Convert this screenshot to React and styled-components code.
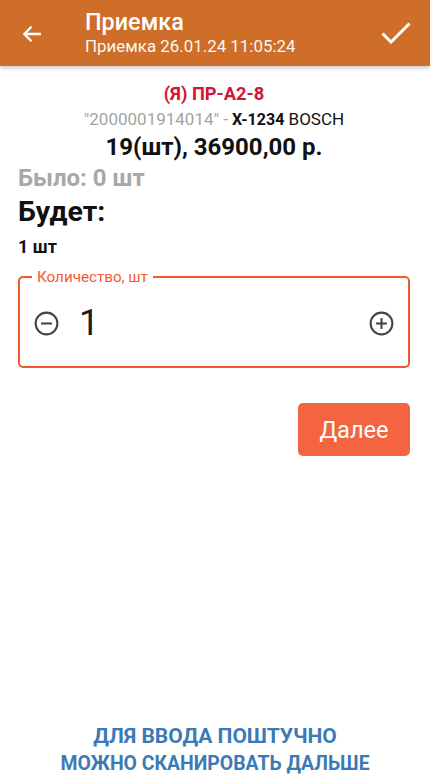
import React from "react"
import styled, { createGlobalStyle } from "styled-components"

const GlobalStyle = createGlobalStyle`
  html, body {
    margin: 0;
    padding: 0;
    background: #ffffff;
    font-family: Roboto, "Noto Sans", "Liberation Sans", sans-serif;
  }
`

const Page = styled.div`
  display: flex;
  flex-direction: column;
  height: 100vh;
  overflow: hidden;
  background: #ffffff;
`
const Header = styled.header`
  display: flex;
  align-items: center;
  height: 66px;
  flex-shrink: 0;
  background-color: #ce6e28;
  box-shadow: 0 2px 4px rgba(0, 0, 0, 0.22);
  color: #ffffff;
  position: relative;
  z-index: 1;
`
const IconButton = styled.button`
  display: flex;
  align-items: center;
  justify-content: center;
  border: 0;
  padding: 0;
  background: none;
  cursor: pointer;
  margin: ${props => props.margin || "0"};
`
const TitleBlock = styled.div`
  display: flex;
  flex-direction: column;
  flex: 1;
  margin-left: 43px;
`
const Title = styled.div`
  font-size: 23.4px;
  font-weight: 500;
  line-height: 26px;
`
const Subtitle = styled.div`
  font-size: 16.9px;
  line-height: 22px;
  opacity: 0.95;
`
const Content = styled.main`
  display: flex;
  flex-direction: column;
  padding: 16px 20px 0 18px;
`
const Line = styled.div`
  text-align: ${props => props.align || "left"};
  font-size: ${props => props.size}px;
  line-height: ${props => props.lh}px;
  font-weight: ${props => props.weight || 400};
  color: ${props => props.color || "#111111"};
  margin-top: ${props => props.mt || 0}px;
`
const Gray = styled.span`
  color: #a3a3a3;
`
const Strong = styled.span`
  font-weight: 700;
  font-size: 16px;
`
const Field = styled.fieldset`
  margin: 11px 0 0 0;
  padding: 0 12px 5px 12px;
  min-width: 0;
  border: 2px solid #f2592f;
  border-radius: 5px;
`
const Legend = styled.legend`
  padding: 0 5px;
  font-size: 15.2px;
  line-height: 16px;
  color: #f2592f;
`
const FieldRow = styled.div`
  display: flex;
  align-items: center;
  height: 76px;
`
const Value = styled.div`
  flex: 1;
  font-size: 36px;
  font-weight: 400;
  color: #1a1a1a;
  margin-left: 18px;
  line-height: 40px;
`
const Actions = styled.div`
  display: flex;
  justify-content: flex-end;
  margin-top: 35px;
`
const NextButton = styled.button`
  width: 112px;
  height: 53px;
  border: 0;
  border-radius: 5px;
  background-color: #f46440;
  color: #ffffff;
  font-family: inherit;
  font-size: 23.6px;
  cursor: pointer;
`
const Footer = styled.footer`
  margin-top: auto;
  margin-bottom: -3px;
  text-align: center;
  color: #3a7ab7;
  font-weight: 700;
  line-height: 28px;
`
const FooterLine = styled.div`
  font-size: ${props => props.size}px;
`

const CircleIcon = ({ plus }) => (
  <svg width="29" height="29" viewBox="0 0 24 24" fill="none">
    <circle cx="12" cy="12" r="9" stroke="#444444" strokeWidth="1.7" />
    <path d="M7.5 12h9" stroke="#444444" strokeWidth="1.7" />
    {plus && <path d="M12 7.5v9" stroke="#444444" strokeWidth="1.7" />}
  </svg>
)

const App = () => {
  return (
    <Page>
      <GlobalStyle />
      <Header>
        <IconButton margin="2px 0 0 22px" aria-label="Назад">
          <svg width="20" height="18" viewBox="0 0 20 18" fill="none">
            <path d="M19 9H2.5M9.5 1.8L2.3 9l7.2 7.2" stroke="#ffffff" strokeWidth="2.3" />
          </svg>
        </IconButton>
        <TitleBlock>
          <Title>Приемка</Title>
          <Subtitle>Приемка 26.01.24 11:05:24</Subtitle>
        </TitleBlock>
        <IconButton margin="0 19px 0 0" aria-label="Готово">
          <svg width="30" height="22" viewBox="0 0 30 22" fill="none">
            <path d="M1.5 11.5L10 20L28.5 1.5" stroke="#ffffff" strokeWidth="3" />
          </svg>
        </IconButton>
      </Header>
      <Content>
        <Line align="center" size={18.3} lh={24} weight={700} color="#d2143a">
          (Я) ПР-А2-8
        </Line>
        <Line align="center" size={17} lh={26}>
          <Gray>"2000001914014" - </Gray>
          <Strong>X-1234</Strong> BOSCH
        </Line>
        <Line align="center" size={24} lh={28} weight={700}>
          19(шт), 36900,00 р.
        </Line>
        <Line size={24} lh={28} weight={700} color="#a8a8a8" mt={3}>
          Было: 0 шт
        </Line>
        <Line size={28.5} lh={34} weight={700} mt={3}>
          Будет:
        </Line>
        <Line size={18} lh={22} weight={700} mt={7}>
          1 шт
        </Line>
        <Field>
          <Legend>Количество, шт</Legend>
          <FieldRow>
            <CircleIcon />
            <Value>1</Value>
            <CircleIcon plus />
          </FieldRow>
        </Field>
        <Actions>
          <NextButton>Далее</NextButton>
        </Actions>
      </Content>
      <Footer>
        <FooterLine size={21}>ДЛЯ ВВОДА ПОШТУЧНО</FooterLine>
        <FooterLine size={19.4}>МОЖНО СКАНИРОВАТЬ ДАЛЬШЕ</FooterLine>
      </Footer>
    </Page>
  )
}
export default App
